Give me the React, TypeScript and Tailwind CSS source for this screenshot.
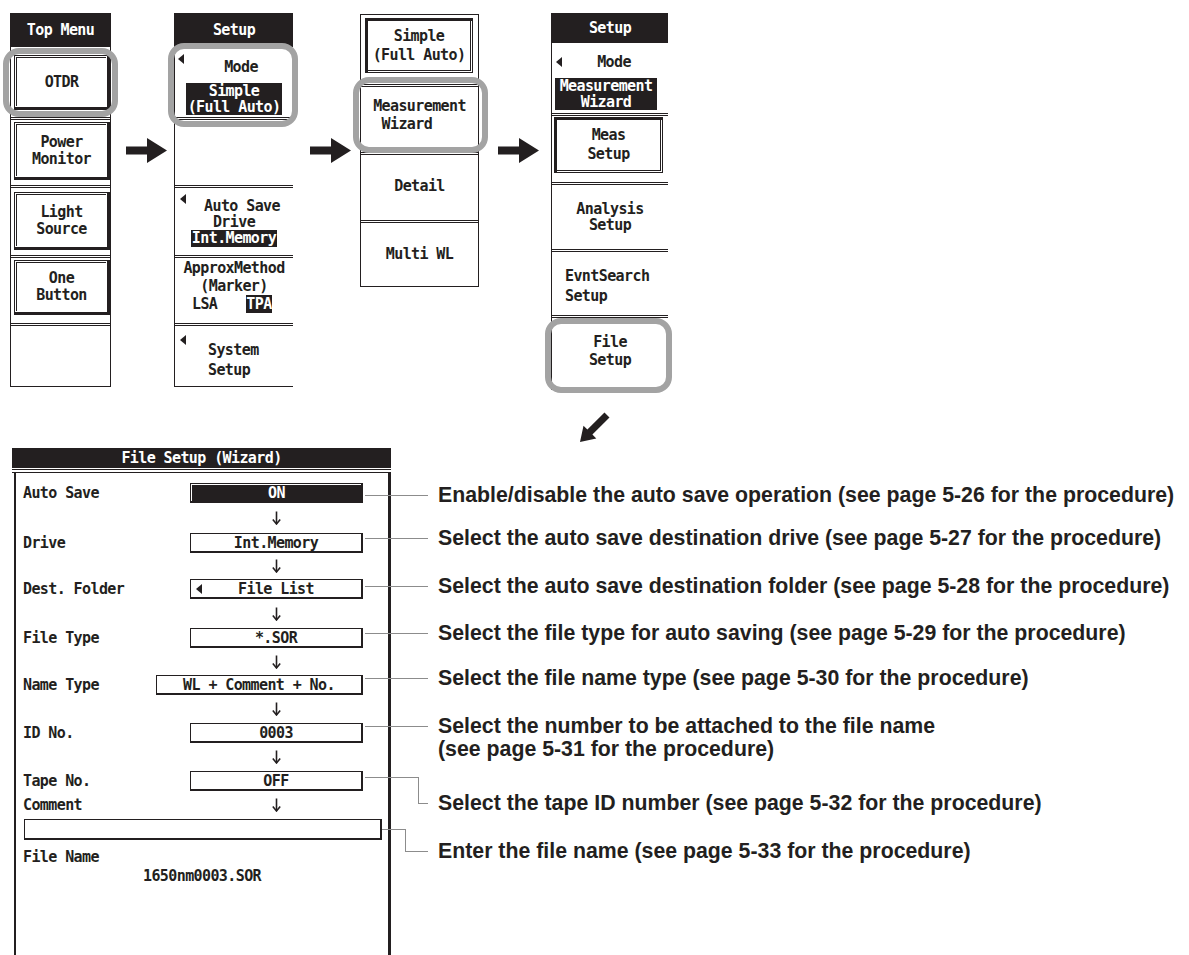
import React from 'react';

// ── Small drawings ────────────────────────────────────────────────

function Tri({ className = '' }: { className?: string }) {
  return (
    <svg width="6" height="10" viewBox="0 0 6 10" className={className}>
      <polygon points="6,0 6,10 0,5" fill="#231f20" />
    </svg>
  );
}

function BlockArrow() {
  return (
    <svg width="41" height="25" viewBox="0 0 41 25" className="block">
      <polygon points="0,8.5 21,8.5 21,0 41,12.5 21,25 21,16.5 0,16.5" fill="#231f20" />
    </svg>
  );
}

function DiagArrow() {
  return (
    <svg width="31" height="31" viewBox="0 -1 31 31" className="block">
      <polygon
        points="1,29 4.5,12.7 8.4,16.6 25.5,-0.5 30.5,4.5 13.4,21.6 17.3,25.5"
        fill="#231f20"
      />
    </svg>
  );
}

function ThinDown() {
  return (
    <svg width="9" height="14" viewBox="0 0 9 14" className="block">
      <path d="M4.5 0.5V12.6" stroke="#231f20" strokeWidth="1.6" />
      <path d="M0.8 8.6L4.5 13L8.2 8.6" fill="none" stroke="#231f20" strokeWidth="1.6" />
    </svg>
  );
}

// gray rounded callout ring drawn over a menu cell
function Ring({ className }: { className: string }) {
  return (
    <div
      className={`pointer-events-none absolute rounded-[16px] border-[6px] border-[#a3a3a3] ${className}`}
    />
  );
}

// ── Soft-key buttons ──────────────────────────────────────────────

function Raised({ lines, className }: { lines: string[]; className: string }) {
  return (
    <div className={`border-t border-l border-r-[3px] border-b-[3px] p-px ${className}`}>
      <div className="flex h-full flex-col items-center justify-center border-t border-l leading-[17px]">
        {lines.map((l) => (
          <span key={l}>{l}</span>
        ))}
      </div>
    </div>
  );
}

function Pressed({ lines, className }: { lines: string[]; className: string }) {
  return (
    <div className={`border-t-[3px] border-l-[3px] border-r border-b pr-px pb-px ${className}`}>
      <div className="flex h-full flex-col items-center justify-center border-r border-b leading-[19px]">
        {lines.map((l) => (
          <span key={l}>{l}</span>
        ))}
      </div>
    </div>
  );
}

function Header({ children, className }: { children: React.ReactNode; className: string }) {
  return (
    <div className={`flex shrink-0 items-center justify-center bg-[#231f20] text-white ${className}`}>
      {children}
    </div>
  );
}

// ── File setup rows ───────────────────────────────────────────────

function ValueBox({ children, wide }: { children: React.ReactNode; wide?: boolean }) {
  return (
    <div
      className={`ml-auto flex h-[20px] items-center justify-center border-t border-l border-r-2 border-b-2 leading-[16px] ${
        wide ? 'w-[207px]' : 'w-[173px]'
      }`}
    >
      {children}
    </div>
  );
}

function Row({ label, children }: { label: string; children: React.ReactNode }) {
  return (
    <div className="flex h-[20px] items-center pl-[7px] pr-[25px]">
      <span className="leading-[16px]">{label}</span>
      {children}
    </div>
  );
}

function Down({ h }: { h: string }) {
  return (
    <div className={`flex items-center justify-end pr-[25px] ${h}`}>
      <div className="flex w-[173px] justify-center">
        <ThinDown />
      </div>
    </div>
  );
}

function Line({ className }: { className: string }) {
  return <div className={`absolute h-px bg-[#8c8c8c] ${className}`} />;
}

// ── Page ──────────────────────────────────────────────────────────

export default function App() {
  return (
    <div className="h-[955px] w-[1189px] overflow-hidden bg-white font-['DejaVu_Sans_Mono',monospace] text-[15px] font-bold tracking-[-0.6px] text-[#231f20]">
      {/* Menu sequence */}
      <div className="flex items-start pt-[13px]">
        {/* Top Menu */}
        <div className="ml-[10px] flex h-[374px] w-[101px] shrink-0 flex-col border-x border-b">
          <Header className="h-[34px]">Top Menu</Header>
          <div className="relative h-[70px] pl-[3px] pt-[8px]">
            <Raised lines={['OTDR']} className="h-[55px]" />
            <Ring className="-left-[8px] -right-[8px] top-[1px] bottom-0" />
          </div>
          <div className="h-[68px] border-t-[3px] border-double pl-[3px] pt-[2px]">
            <Raised lines={['Power', 'Monitor']} className="h-[58px]" />
          </div>
          <div className="h-[70px] border-t-[3px] border-double pl-[3px] pt-[4px]">
            <Raised lines={['Light', 'Source']} className="h-[58px]" />
          </div>
          <div className="h-[68px] border-t-[3px] border-double pl-[3px] pt-[2px]">
            <Raised lines={['One', 'Button']} className="h-[55px]" />
          </div>
          <div className="flex-1 border-t-[3px] border-double" />
        </div>

        <div className="ml-[15px] mt-[125px] shrink-0">
          <BlockArrow />
        </div>

        {/* Setup (Simple mode) */}
        <div className="ml-[7px] flex h-[374px] w-[119px] shrink-0 flex-col border-l border-b">
          <Header className="h-[34px]">Setup</Header>
          <div className="relative flex h-[70px] flex-col items-center pt-[12px]">
            <Tri className="absolute left-[3px] top-[7px]" />
            <span className="pl-[14px] leading-[16px]">Mode</span>
            <div className="mt-[8px] flex w-[96px] flex-col items-center bg-[#231f20] leading-[16px] text-white">
              <span>Simple</span>
              <span>(Full Auto)</span>
            </div>
            <Ring className="-left-[7px] -right-[5px] -top-[4px] -bottom-[10px]" />
          </div>
          <div className="h-[68px] border-t-[3px] border-double" />
          <div className="relative flex h-[70px] flex-col items-center border-t-[3px] border-double pt-[10px] leading-[16px]">
            <Tri className="absolute left-[5px] top-[6px]" />
            <span className="pl-[16px]">Auto Save</span>
            <span>Drive</span>
            <span className="bg-[#231f20] px-px leading-[17px] text-white">Int.Memory</span>
          </div>
          <div className="flex h-[68px] flex-col border-t-[3px] border-double pt-px leading-[18px]">
            <span className="text-center">ApproxMethod</span>
            <span className="text-center">(Marker)</span>
            <div className="flex pl-[17px]">
              <span>LSA</span>
              <span className="ml-[29px] bg-[#231f20] text-white">TPA</span>
            </div>
          </div>
          <div className="relative flex flex-1 flex-col border-t-[3px] border-double pl-[33px] pt-[14px] leading-[20px]">
            <Tri className="absolute left-[5px] top-[9px]" />
            <span>System</span>
            <span>Setup</span>
          </div>
        </div>

        <div className="ml-[17px] mt-[125px] shrink-0">
          <BlockArrow />
        </div>

        {/* Mode choices */}
        <div className="ml-[9px] mt-px flex h-[273px] w-[119px] shrink-0 flex-col border">
          <div className="h-[69px] pl-[4px] pt-[3px]">
            <Pressed lines={['Simple', '(Full Auto)']} className="h-[55px] w-[108px]" />
          </div>
          <div className="relative flex h-[68px] flex-col items-center border-t-[3px] border-double pt-[10px]">
            <span className="whitespace-pre leading-[18px]">{'Measurement\n Wizard'}</span>
            <Ring className="-left-[8px] -right-[10px] -top-[10px] -bottom-px" />
          </div>
          <div className="flex h-[68px] flex-col items-center border-t-[3px] border-double pt-[22px] leading-[18px]">
            Detail
          </div>
          <div className="flex flex-1 flex-col items-center border-t-[3px] border-double pt-[22px] leading-[18px]">
            Multi WL
          </div>
        </div>

        <div className="ml-[19px] mt-[125px] shrink-0">
          <BlockArrow />
        </div>

        {/* Setup (Wizard mode) */}
        <div className="ml-[12px] flex h-[377px] w-[117px] shrink-0 flex-col border-l">
          <Header className="h-[30px]">Setup</Header>
          <div className="relative flex h-[70px] flex-col items-center pt-[11px]">
            <Tri className="absolute left-[4px] top-[14px]" />
            <span className="pl-[8px] leading-[16px]">Mode</span>
            <div className="ml-[3px] mt-[8px] flex w-[102px] flex-col items-center self-start bg-[#231f20] leading-[16px] text-white">
              <span>Measurement</span>
              <span>Wizard</span>
            </div>
          </div>
          <div className="h-[69px] border-t-[3px] border-double pl-[2px] pt-px">
            <Pressed lines={['Meas', 'Setup']} className="h-[56px] w-[109px]" />
          </div>
          <div className="flex h-[67px] flex-col items-center justify-center border-t-[3px] border-double leading-[16px]">
            <span>Analysis</span>
            <span>Setup</span>
          </div>
          <div className="flex h-[66px] flex-col border-t-[3px] border-double pl-[13px] pt-[14px] leading-[20px]">
            <span>EvntSearch</span>
            <span>Setup</span>
          </div>
          <div className="relative flex flex-1 flex-col items-center border-t-[3px] border-double pt-[15px] leading-[18px]">
            <span>File</span>
            <span>Setup</span>
            <Ring className="-left-[7px] -right-[4px] top-0 -bottom-[3px]" />
          </div>
        </div>
      </div>

      <div className="ml-[579px] mt-[22px]">
        <DiagArrow />
      </div>

      {/* File Setup (Wizard) screen with annotations */}
      <div className="mt-[5px] flex items-start">
        <div className="ml-[12px] flex h-[507px] w-[379px] shrink-0 flex-col">
          <Header className="h-[20px] leading-[16px]">File Setup (Wizard)</Header>
          <div className="mt-px h-[4px] border-y" />
          <div className="ml-[2px] flex flex-1 flex-col border-l-2 border-r-[3px] pt-[10px]">
            <Row label="Auto Save">
              <div className="ml-auto flex h-[20px] w-[173px] border-t border-l border-r-2 border-b-2">
                <div className="ml-px mt-px flex flex-1 items-center justify-center bg-[#231f20] leading-[16px] text-white">
                  ON
                </div>
              </div>
            </Row>
            <Down h="h-[30px]" />
            <Row label="Drive">
              <ValueBox>Int.Memory</ValueBox>
            </Row>
            <Down h="h-[26px]" />
            <Row label="Dest. Folder">
              <div className="relative ml-auto flex h-[20px] w-[173px] items-center justify-center border-t border-l border-r-2 border-b-2 leading-[16px]">
                <Tri className="absolute left-[5px] top-[4px]" />
                File List
              </div>
            </Row>
            <Down h="h-[29px]" />
            <Row label="File Type">
              <ValueBox>*.SOR</ValueBox>
            </Row>
            <Down h="h-[27px]" />
            <Row label="Name Type">
              <ValueBox wide>WL + Comment + No.</ValueBox>
            </Row>
            <Down h="h-[28px]" />
            <Row label="ID No.">
              <ValueBox>0003</ValueBox>
            </Row>
            <Down h="h-[28px]" />
            <Row label="Tape No.">
              <ValueBox>OFF</ValueBox>
            </Row>
            <div className="flex h-[28px] items-center pl-[7px] pr-[25px]">
              <span className="leading-[16px]">Comment</span>
              <div className="ml-auto flex w-[173px] justify-center">
                <ThinDown />
              </div>
            </div>
            <div className="ml-[8px] mr-[6px] h-[21px] border-t border-l border-r-2 border-b-2" />
            <div className="mt-[9px] pl-[7px] leading-[16px]">File Name</div>
            <div className="mt-[3px] text-center leading-[16px]">1650nm0003.SOR</div>
          </div>
        </div>

        <div className="ml-[47px] flex flex-col whitespace-nowrap pt-[36px] font-['Liberation_Sans',Arial,sans-serif] text-[21.3px] font-bold leading-[23px] tracking-normal">
          <div className="relative">
            <Line className="-left-[73px] top-[11px] w-[63px]" />
            Enable/disable the auto save operation (see page 5-26 for the procedure)
          </div>
          <div className="relative mt-[20px]">
            <Line className="-left-[73px] top-[11px] w-[63px]" />
            Select the auto save destination drive (see page 5-27 for the procedure)
          </div>
          <div className="relative mt-[25px]">
            <Line className="-left-[73px] top-[11px] w-[63px]" />
            Select the auto save destination folder (see page 5-28 for the procedure)
          </div>
          <div className="relative mt-[24px]">
            <Line className="-left-[73px] top-[11px] w-[63px]" />
            Select the file type for auto saving (see page 5-29 for the procedure)
          </div>
          <div className="relative mt-[22px]">
            <Line className="-left-[73px] top-[11px] w-[63px]" />
            Select the file name type (see page 5-30 for the procedure)
          </div>
          <div className="relative mt-[25px]">
            <Line className="-left-[73px] top-[11px] w-[63px]" />
            Select the number to be attached to the file name
            <br />
            (see page 5-31 for the procedure)
          </div>
          <div className="relative mt-[31px]">
            <Line className="-left-[73px] -top-[15px] w-[53px]" />
            <div className="absolute -left-[20px] -top-[15px] h-[27px] w-[10px] border-l border-b border-[#8c8c8c]" />
            Select the tape ID number (see page 5-32 for the procedure)
          </div>
          <div className="relative mt-[25px]">
            <Line className="-left-[56px] -top-[11px] w-[23px]" />
            <div className="absolute -left-[33px] -top-[11px] h-[23px] w-[23px] border-l border-b border-[#8c8c8c]" />
            Enter the file name (see page 5-33 for the procedure)
          </div>
        </div>
      </div>
    </div>
  );
}
